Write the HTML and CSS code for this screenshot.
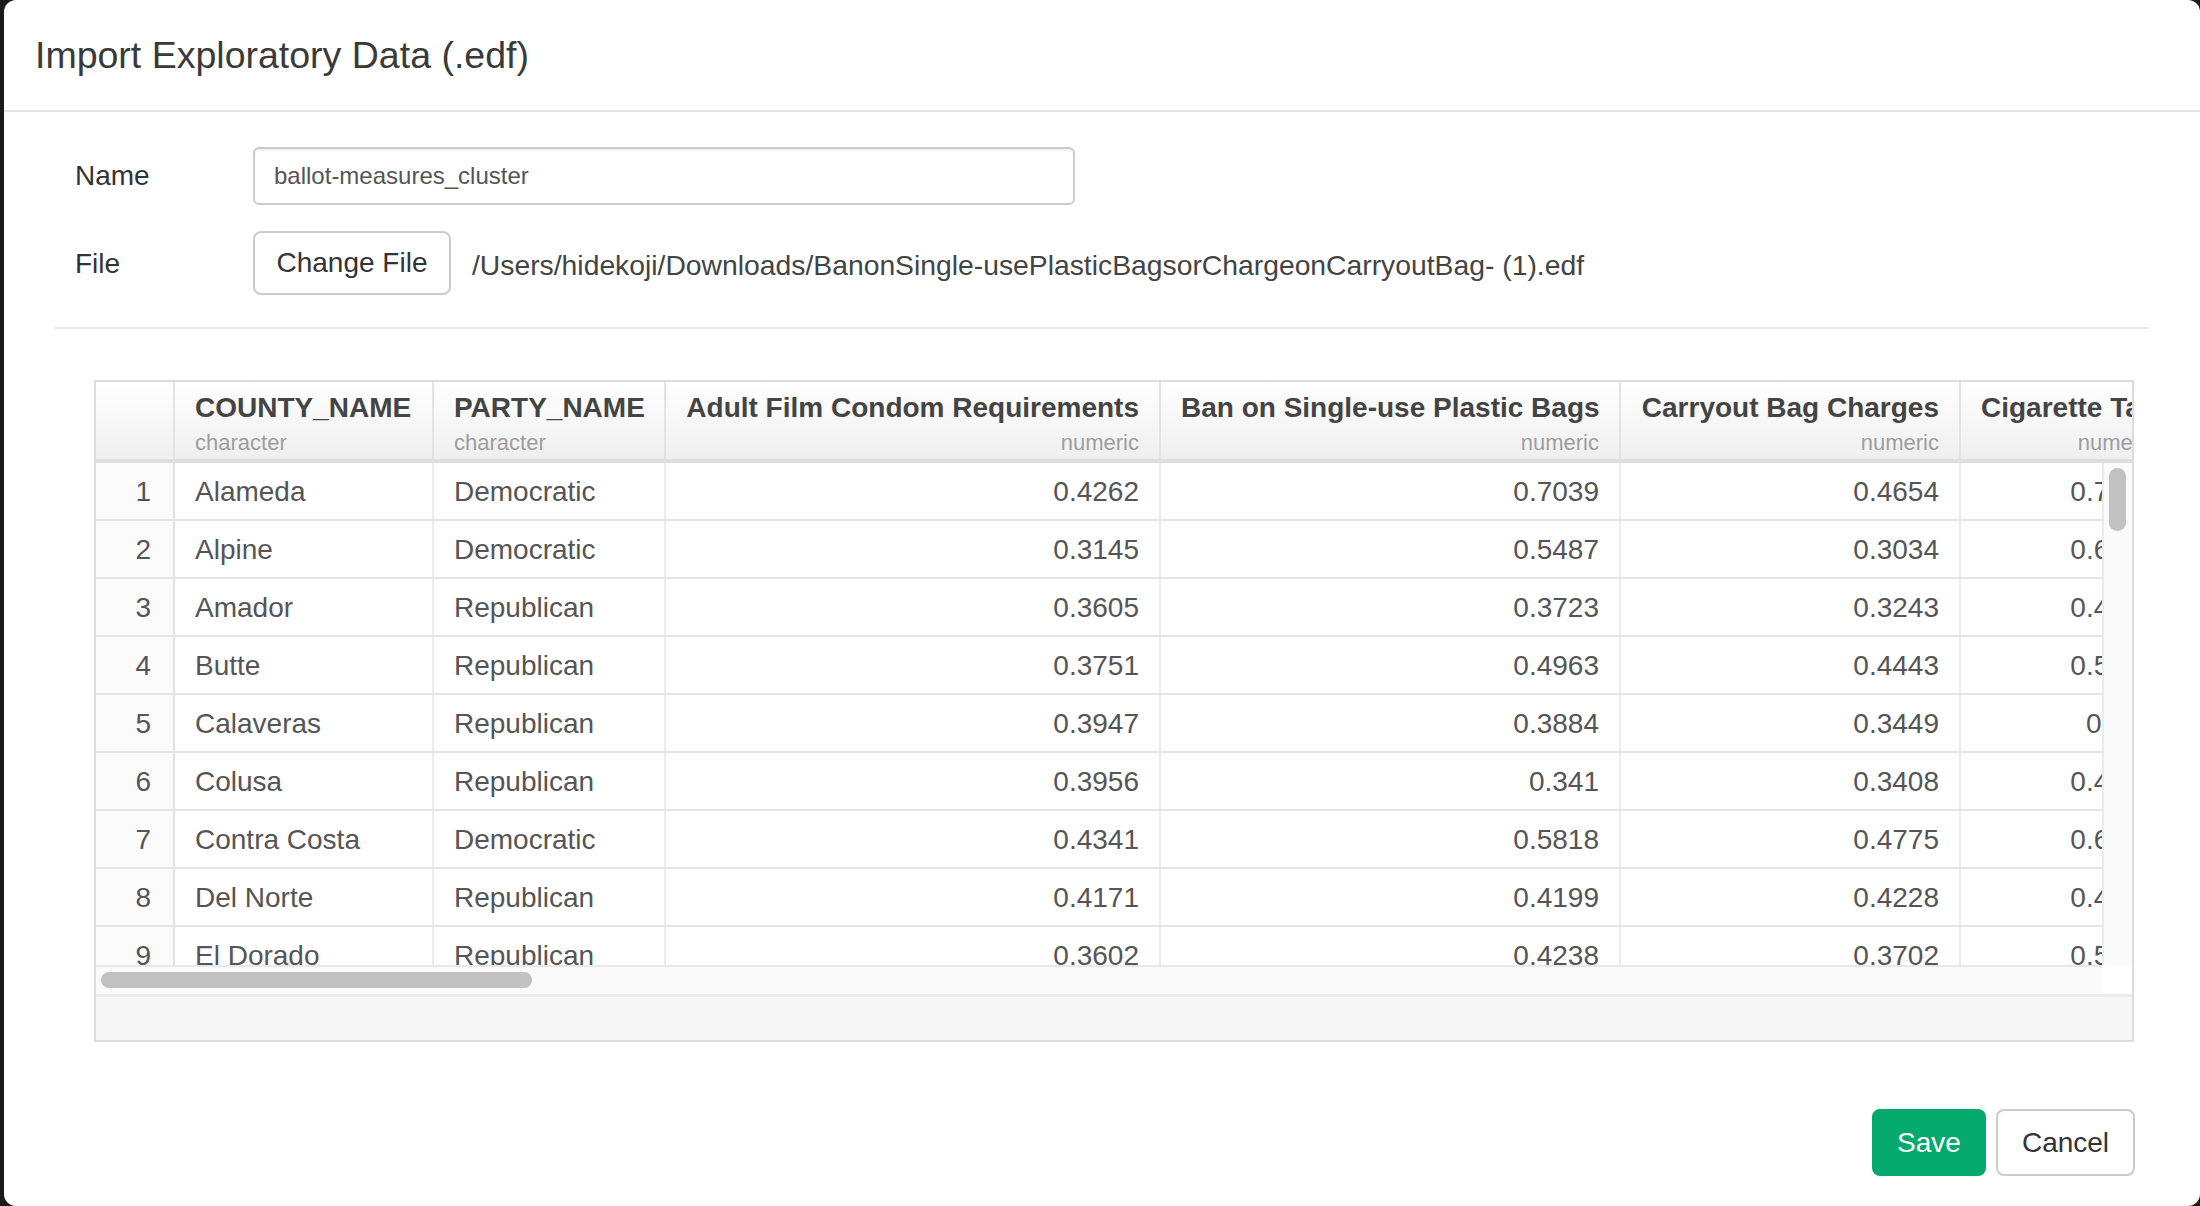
FILE: index.html
```html
<!DOCTYPE html>
<html>
<head>
<meta charset="utf-8">
<title>Import Exploratory Data</title>
<link rel="stylesheet" href="styles.css">
</head>
<body>
<div class="modal">
  <div class="modal-header">
    <h4 class="modal-title">Import Exploratory Data (.edf)</h4>
  </div>
  <div class="modal-body">
    <div class="form">
      <div class="form-row name-row">
        <label class="form-label">Name</label>
        <div class="text-input">ballot-measures_cluster</div>
      </div>
      <div class="form-row file-row">
        <label class="form-label">File</label>
        <button class="btn btn-default btn-file">Change File</button>
        <span class="file-path">/Users/hidekoji/Downloads/BanonSingle-usePlasticBagsorChargeonCarryoutBag- (1).edf</span>
      </div>
    </div>
    <div class="divider"></div>
    <div class="grid">
      <div class="ghead">
        <div class="hc c0"></div>
        <div class="hc c1"><div class="hname">COUNTY_NAME</div><div class="htype">character</div></div>
        <div class="hc c2"><div class="hname">PARTY_NAME</div><div class="htype">character</div></div>
        <div class="hc c3 num"><div class="hname">Adult Film Condom Requirements</div><div class="htype">numeric</div></div>
        <div class="hc c4 num"><div class="hname">Ban on Single-use Plastic Bags</div><div class="htype">numeric</div></div>
        <div class="hc c5 num"><div class="hname">Carryout Bag Charges</div><div class="htype">numeric</div></div>
        <div class="hc c6 num"><div class="hname">Cigarette Tax</div><div class="htype">numeric</div></div>
      </div>
      <div class="gbody">
        <div class="gview">
          <div class="row"><div class="dc c0 rn">1</div><div class="dc c1">Alameda</div><div class="dc c2">Democratic</div><div class="dc c3 num">0.4262</div><div class="dc c4 num">0.7039</div><div class="dc c5 num">0.4654</div><div class="dc c6 num">0.7021</div></div>
          <div class="row"><div class="dc c0 rn">2</div><div class="dc c1">Alpine</div><div class="dc c2">Democratic</div><div class="dc c3 num">0.3145</div><div class="dc c4 num">0.5487</div><div class="dc c5 num">0.3034</div><div class="dc c6 num">0.6125</div></div>
          <div class="row"><div class="dc c0 rn">3</div><div class="dc c1">Amador</div><div class="dc c2">Republican</div><div class="dc c3 num">0.3605</div><div class="dc c4 num">0.3723</div><div class="dc c5 num">0.3243</div><div class="dc c6 num">0.4573</div></div>
          <div class="row"><div class="dc c0 rn">4</div><div class="dc c1">Butte</div><div class="dc c2">Republican</div><div class="dc c3 num">0.3751</div><div class="dc c4 num">0.4963</div><div class="dc c5 num">0.4443</div><div class="dc c6 num">0.5734</div></div>
          <div class="row"><div class="dc c0 rn">5</div><div class="dc c1">Calaveras</div><div class="dc c2">Republican</div><div class="dc c3 num">0.3947</div><div class="dc c4 num">0.3884</div><div class="dc c5 num">0.3449</div><div class="dc c6 num">0.512</div></div>
          <div class="row"><div class="dc c0 rn">6</div><div class="dc c1">Colusa</div><div class="dc c2">Republican</div><div class="dc c3 num">0.3956</div><div class="dc c4 num">0.341</div><div class="dc c5 num">0.3408</div><div class="dc c6 num">0.4812</div></div>
          <div class="row"><div class="dc c0 rn">7</div><div class="dc c1">Contra Costa</div><div class="dc c2">Democratic</div><div class="dc c3 num">0.4341</div><div class="dc c4 num">0.5818</div><div class="dc c5 num">0.4775</div><div class="dc c6 num">0.6419</div></div>
          <div class="row"><div class="dc c0 rn">8</div><div class="dc c1">Del Norte</div><div class="dc c2">Republican</div><div class="dc c3 num">0.4171</div><div class="dc c4 num">0.4199</div><div class="dc c5 num">0.4228</div><div class="dc c6 num">0.4905</div></div>
          <div class="row"><div class="dc c0 rn">9</div><div class="dc c1">El Dorado</div><div class="dc c2">Republican</div><div class="dc c3 num">0.3602</div><div class="dc c4 num">0.4238</div><div class="dc c5 num">0.3702</div><div class="dc c6 num">0.5318</div></div>
          <div class="row"><div class="dc c0 rn">10</div><div class="dc c1">Fresno</div><div class="dc c2">Republican</div><div class="dc c3 num">0.3811</div><div class="dc c4 num">0.4412</div><div class="dc c5 num">0.3951</div><div class="dc c6 num">0.5102</div></div>
        </div>
        <div class="vscroll"><div class="vthumb"></div></div>
      </div>
      <div class="hscroll-row">
        <div class="hscroll"><div class="hthumb"></div></div>
        <div class="corner"></div>
      </div>
      <div class="gfoot"></div>
    </div>
  </div>
  <div class="modal-footer">
    <button class="btn btn-save">Save</button>
    <button class="btn btn-default btn-cancel">Cancel</button>
  </div>
</div>
</body>
</html>
```
FILE: styles.css
```css
html, body {
  margin: 0;
  padding: 0;
  background: #1a1a1a;
  overflow: hidden;
}
body {
  font-family: "Liberation Sans", Arial, sans-serif;
  color: #333;
}
.modal {
  margin-left: 4px;
  width: 2196px;
  height: 1206px;
  background: #fff;
  border-radius: 12px;
  box-sizing: border-box;
  display: flex;
  flex-direction: column;
  overflow: hidden;
}
.modal-header {
  padding: 30px 30px 29px 31px;
  border-bottom: 2px solid #e5e5e5;
}
.modal-title {
  margin: 0;
  font-size: 37.5px;
  line-height: 51px;
  font-weight: normal;
  color: #3a3a3a;
}
.modal-body {
  padding: 0 52px 0 51px;
}
.form {
  padding-left: 20px;
}
.form-row {
  display: flex;
  align-items: center;
}
.name-row {
  margin-top: 35px;
}
.file-row {
  margin-top: 26px;
}
.form-label {
  width: 178px;
  flex: none;
  font-size: 28px;
  color: #333;
}
.file-row .form-label {
  padding-top: 2px;
}
.text-input {
  width: 822px;
  height: 58px;
  box-sizing: border-box;
  border: 2px solid #ccc;
  border-radius: 6px;
  padding: 0 19px;
  font-size: 24px;
  line-height: 54px;
  color: #555;
  box-shadow: inset 0 2px 2px rgba(0,0,0,0.06);
}
.btn {
  font-family: "Liberation Sans", Arial, sans-serif;
  font-size: 28px;
  border-radius: 8px;
  box-sizing: border-box;
  cursor: pointer;
}
.btn-default {
  background: #fff;
  border: 2px solid #ccc;
  color: #333;
}
.btn-file {
  width: 198px;
  height: 64px;
  padding: 0;
}
.file-path {
  margin-left: 21px;
  padding-top: 4px;
  font-size: 28.3px;
  color: #444;
}
.divider {
  margin-top: 32px;
  height: 2px;
  background: #e5e5e5;
}
.grid {
  margin: 51px 14px 0 39px;
  height: 662px;
  border: 2px solid #dcdcdc;
  box-sizing: border-box;
  display: flex;
  flex-direction: column;
  overflow: hidden;
}
.ghead {
  display: flex;
  flex: none;
  height: 81px;
  box-sizing: border-box;
  border-bottom: 4px solid #dedede;
  background: linear-gradient(#ffffff, #efefef);
  overflow: hidden;
}
.hc, .dc {
  flex: none;
  box-sizing: border-box;
  border-right: 2px solid #e3e3e3;
  padding: 0 20px;
  white-space: nowrap;
  overflow: hidden;
}
.c0 { width: 79px; }
.c1 { width: 259px; }
.c2 { width: 232px; }
.c3 { width: 495px; }
.c4 { width: 460px; }
.c5 { width: 340px; }
.c6 { width: 217px; }
.hc {
  padding-top: 10px;
}
.hname {
  font-size: 28px;
  line-height: 32px;
  font-weight: bold;
  color: #444;
}
.htype {
  margin-top: 4px;
  font-size: 22px;
  line-height: 30px;
  color: #9e9e9e;
}
.num {
  text-align: right;
}
.gbody {
  display: flex;
  flex: none;
  height: 502px;
}
.gview {
  flex: 1;
  overflow: hidden;
  min-width: 0;
}
.row {
  display: flex;
  height: 58px;
  box-sizing: border-box;
  border-bottom: 2px solid #e4e4e4;
}
.dc {
  font-size: 28px;
  line-height: 57px;
  color: #555;
  border-right-color: #ececec;
}
.dc.rn {
  padding: 0 22px 0 0;
  text-align: right;
  background: #fbfbfb;
  border-right-color: #e3e3e3;
}
.vscroll {
  width: 30px;
  flex: none;
  box-sizing: border-box;
  background: #fafafa;
  border-left: 2px solid #ebebeb;
  padding-top: 5px;
}
.vthumb {
  width: 17px;
  height: 63px;
  margin-left: 5px;
  border-radius: 9px;
  background: #c1c1c1;
}
.hscroll-row {
  display: flex;
  flex: none;
  height: 29px;
}
.hscroll {
  flex: 1;
  box-sizing: border-box;
  background: #fafafa;
  border-top: 2px solid #e8e8e8;
  padding: 5px 0 0 5px;
}
.hthumb {
  width: 431px;
  height: 16px;
  border-radius: 8px;
  background: #c1c1c1;
}
.corner {
  width: 30px;
  flex: none;
  background: #fff;
}
.gfoot {
  flex: 1;
  background: #f7f7f7;
  border-top: 3px solid #ececec;
}
.modal-footer {
  display: flex;
  justify-content: flex-end;
  gap: 10px;
  padding: 67px 65px 0 0;
}
.btn-save {
  width: 114px;
  height: 67px;
  background: #04aa6d;
  border: 2px solid #04aa6d;
  color: #fff;
  padding: 0;
}
.btn-cancel {
  width: 139px;
  height: 67px;
  padding: 0;
}
```
